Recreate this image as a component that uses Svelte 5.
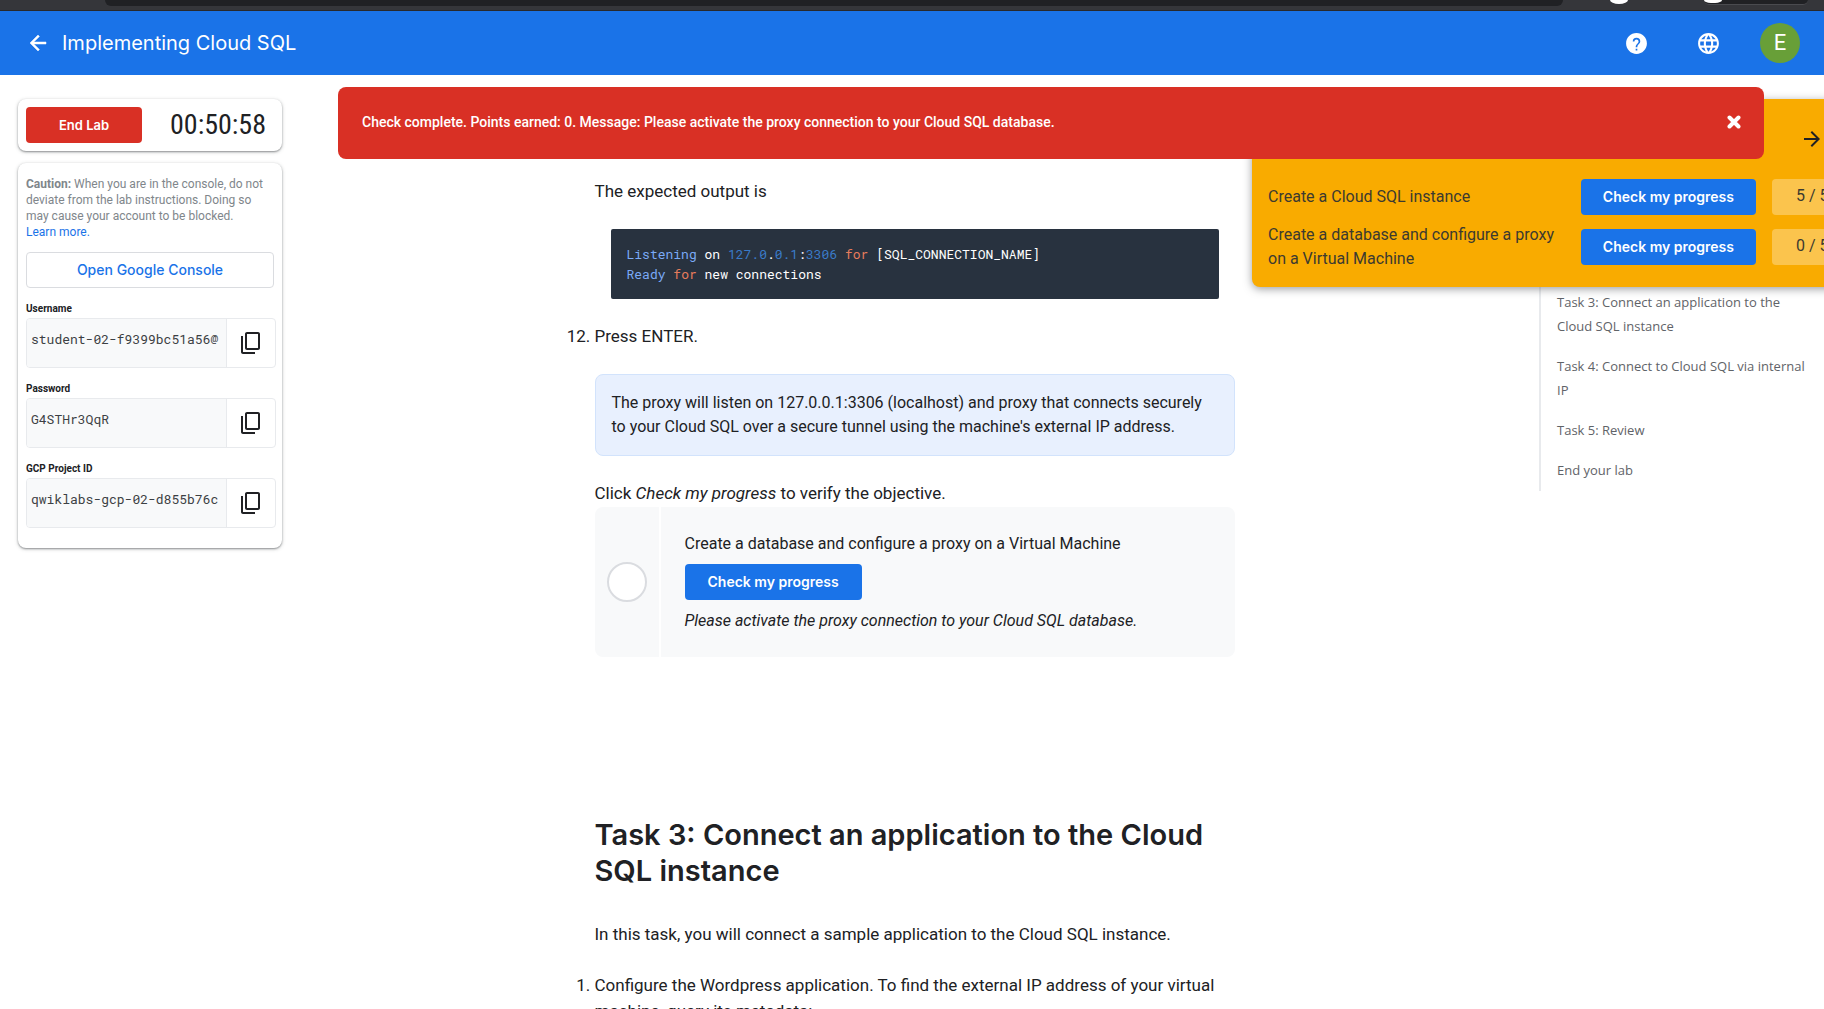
<script>
  const credentials = [
    { id: 'username', label: 'Username', value: 'student-02-f9399bc51a56@' },
    { id: 'password', label: 'Password', value: 'G4STHr3QqR' },
    { id: 'project', label: 'GCP Project ID', value: 'qwiklabs-gcp-02-d855b76c' },
  ];
  const objectives = [
    { title: 'Create a Cloud SQL instance', score: '5 / 5' },
    { title: 'Create a database and configure a proxy on a Virtual Machine', score: '0 / 5' },
  ];
  const outline = [
    'Task 3: Connect an application to the Cloud SQL instance',
    'Task 4: Connect to Cloud SQL via internal IP',
    'Task 5: Review',
    'End your lab',
  ];
  let toastOpen = $state(true);
</script>

<div class="page">
  <div class="browser" aria-hidden="true">
    <span class="omnibox"></span>
    <span class="ext"></span>
    <span class="profile"><span class="ext"></span></span>
  </div>

  <header>
    <a class="back" href="#catalog" aria-label="Back">
      <svg width="24" height="24" viewBox="0 0 24 24" fill="currentColor" stroke="currentColor" stroke-width="0.5"><path d="M20 11H7.83l5.59-5.59L12 4l-8 8 8 8 1.410-1.410L7.830 13H20z" /></svg>
    </a>
    <h1>Implementing Cloud SQL</h1>
    <button class="bar-icon" aria-label="Help">
      <svg width="25" height="25" viewBox="0 0 24 24" fill="currentColor"><path d="M12 2C6.480 2 2 6.480 2 12s4.480 10 10 10 10-4.480 10-10S17.520 2 12 2zm.8 16.600h-1.600V17h1.600v1.600zm1.900-6.500l-.8.800c-.8.800-1.100 1.400-1.100 2.700h-1.600v-.4c0-1 .4-1.900 1.100-2.600l1.100-1.100c.4-.4.600-.8.600-1.400a2 2 0 0 0-4 0H8.400a3.600 3.600 0 0 1 7.200 0c0 .8-.4 1.500-.9 2z" /></svg>
    </button>
    <button class="bar-icon" aria-label="Language">
      <svg width="25" height="25" viewBox="0 0 24 24" fill="currentColor"><path d="M11.990 2C6.470 2 2 6.480 2 12s4.470 10 9.990 10C17.520 22 22 17.520 22 12S17.520 2 11.990 2zm6.930 6h-2.950c-.32-1.250-.78-2.450-1.380-3.560 1.840.63 3.370 1.910 4.330 3.560zM12 4.040c.83 1.200 1.480 2.530 1.910 3.960h-3.820c.43-1.430 1.080-2.760 1.910-3.960zM4.260 14C4.100 13.360 4 12.690 4 12s.1-1.360.26-2h3.380c-.08.66-.14 1.320-.14 2s.06 1.340.14 2H4.260zm.82 2h2.950c.32 1.250.78 2.450 1.380 3.560-1.840-.63-3.370-1.900-4.330-3.560zm2.950-8H5.080c.96-1.660 2.490-2.930 4.330-3.560C8.810 5.550 8.350 6.750 8.030 8zM12 19.960c-.83-1.200-1.480-2.530-1.910-3.960h3.820c-.43 1.430-1.080 2.760-1.910 3.960zM14.340 14H9.660c-.09-.66-.16-1.320-.16-2s.07-1.350.16-2h4.680c.09.65.16 1.320.16 2s-.07 1.340-.16 2zm.25 5.560c.6-1.110 1.060-2.310 1.380-3.560h2.950c-.96 1.650-2.490 2.930-4.330 3.560zM16.360 14c.08-.66.14-1.320.14-2s-.06-1.340-.14-2h3.380c.16.64.26 1.310.26 2s-.1 1.360-.26 2h-3.380z" /></svg>
    </button>
    <button class="avatar" aria-label="Account">E</button>
  </header>

  <div class="body">
    <aside class="side">
      <section class="card control">
        <button class="end">End Lab</button>
        <time>00:50:58</time>
      </section>
      <section class="card">
        <p class="caution"><strong>Caution:</strong> When you are in the console, do not deviate from the lab instructions. Doing so may cause your account to be blocked. <a href="#learn">Learn more.</a></p>
        <button class="console">Open Google Console</button>
        {#each credentials as c}
          <div class="cred">
            <label for={c.id}>{c.label}</label>
            <div class="field">
              <input id={c.id} type="text" readonly value={c.value} />
              <button aria-label={`Copy ${c.label}`}>
                <svg width="24" height="24" viewBox="0 0 24 24" fill="currentColor"><path d="M16 21H4V5H2v16c0 1.100.9 2 2 2h12v-2zM19 1H8c-1.100 0-2 .9-2 2v14c0 1.100.9 2 2 2h11c1.100 0 2-.9 2-2V3c0-1.100-.9-2-2-2zm0 16H8V3h11v14z" /></svg>
              </button>
            </div>
          </div>
        {/each}
      </section>
    </aside>

    <main>
      <ol start="12">
        <li class="continued">
          <p>The expected output is</p>
          <pre><code><b class="type">Listening</b> on <b class="num">127.0</b>.<b class="num">0.1</b>:<b class="num">3306</b> <b class="kw">for</b> [SQL_CONNECTION_NAME]
<b class="type">Ready</b> <b class="kw">for</b> new connections</code></pre>
        </li>
        <li>Press ENTER.</li>
      </ol>
      <p class="note">The proxy will listen on 127.0.0.1:3306 (localhost) and proxy that connects securely to your Cloud SQL over a secure tunnel using the machine's external IP address.</p>
      <p>Click <em>Check my progress</em> to verify the objective.</p>
      <section class="step">
        <div class="mark"><span></span></div>
        <div class="detail">
          <p>Create a database and configure a proxy on a Virtual Machine</p>
          <button class="check">Check my progress</button>
          <p><em>Please activate the proxy connection to your Cloud SQL database.</em></p>
        </div>
      </section>
      <h2>Task 3: Connect an application to the Cloud SQL instance</h2>
      <p>In this task, you will connect a sample application to the Cloud SQL instance.</p>
      <ol class="next">
        <li>Configure the Wordpress application. To find the external IP address of your virtual machine, query its metadata:</li>
      </ol>
    </main>

    <nav aria-label="Lab outline">
      {#each outline as item}
        <a href="#section">{item}</a>
      {/each}
    </nav>
  </div>

  <section class="progress" aria-label="Lab progress">
    <div class="progress-top">
      <button aria-label="Collapse">
        <svg width="24" height="24" viewBox="0 0 24 24" fill="currentColor"><path d="M12 4l-1.410 1.410L16.170 11H4v2h12.170l-5.580 5.590L12 20l8-8z" /></svg>
      </button>
    </div>
    {#each objectives as o}
      <div class="objective">
        <p>{o.title}</p>
        <button class="check">Check my progress</button>
        <span class="score">{o.score}</span>
      </div>
    {/each}
  </section>

  {#if toastOpen}
    <div class="toast" role="alert">
      <p>Check complete. Points earned: 0. Message: Please activate the proxy connection to your Cloud SQL database.</p>
      <button aria-label="Close" onclick={() => (toastOpen = false)}>
        <svg width="14" height="14" viewBox="0 0 14 14" fill="none" stroke="currentColor" stroke-width="4" stroke-linecap="round"><path d="M2.500 2.500l9 9M11.500 2.500l-9 9" /></svg>
      </button>
    </div>
  {/if}
</div>

<style>
  :global(body) {
    background: #fff;
  }
  .page {
    position: relative;
    height: 100vh;
    overflow: hidden;
    color: #202124;
    font-family: Roboto, 'Liberation Sans', sans-serif;
    font-size: 17px;
    line-height: 24px;
  }
  .page *,
  .page {
    box-sizing: border-box;
  }
  p, h1, h2, ol, pre {
    margin: 0;
  }
  a {
    color: #1a73e8;
    text-decoration: none;
  }
  button {
    border: 0;
    padding: 0;
    background: none;
    color: inherit;
    font: inherit;
    cursor: pointer;
  }
  svg {
    display: block;
  }

  .browser {
    display: flex;
    align-items: flex-start;
    height: 11px;
    padding: 0 16px 0 105px;
    background: #35363a;
    border-bottom: 1px solid #28292c;
  }
  .omnibox {
    flex: 1;
    height: 6px;
    margin-right: 47px;
    background: #202124;
    border-radius: 0 0 12px 12px;
  }
  .ext {
    width: 18px;
    height: 4px;
    background: #fff;
    border-radius: 0 0 9px 9px / 0 0 4px 4px;
  }
  .profile {
    display: flex;
    width: 104px;
    height: 5px;
    margin-left: 76px;
    background: #202124;
    border-bottom: 1px solid #4a4b4f;
    border-radius: 0 0 12px 12px;
  }
  .profile .ext {
    height: 3px;
  }

  header {
    display: flex;
    align-items: center;
    height: 64px;
    padding: 0 24px 0 26px;
    background: #1a73e8;
    color: #fff;
  }
  .back {
    color: #fff;
  }
  h1 {
    flex: 1;
    margin-left: 12px;
    font: 400 20px/28px Inter, sans-serif;
  }
  .bar-icon {
    margin-right: 47px;
  }
  .bar-icon + .avatar {
    margin-left: -8px;
  }
  .avatar {
    width: 40px;
    height: 40px;
    border-radius: 50%;
    background: #689f38;
    font-size: 22px;
  }

  .body {
    display: grid;
    grid-template-columns: 290px minmax(0, 1fr) 285px;
    align-items: start;
  }
  .side {
    display: flex;
    flex-direction: column;
    gap: 12px;
    width: 264px;
    margin: 24px 0 0 18px;
  }
  .card {
    padding: 13px 8px 20px;
    border-radius: 8px;
    background: #fff;
    box-shadow: 0 1px 2px rgba(60, 64, 67, 0.5), 0 1px 4px rgba(60, 64, 67, 0.2);
  }
  .control {
    display: flex;
    align-items: center;
    padding: 8px;
  }
  .end {
    width: 116px;
    height: 36px;
    border-radius: 4px;
    background: #d93025;
    color: #fff;
    font: 600 13px/20px Inter, sans-serif;
  }
  time {
    flex: 1;
    padding-left: 20px;
    text-align: center;
    font: 400 28px/36px 'Roboto Condensed', Roboto, sans-serif;
  }
  .caution {
    color: #80868b;
    font-size: 12px;
    line-height: 16px;
  }
  .caution a {
    display: block;
  }
  .console {
    display: block;
    width: 100%;
    height: 36px;
    margin-top: 12px;
    border: 1px solid #dadce0;
    border-radius: 4px;
    color: #1a73e8;
    font: 500 14px/20px Inter, sans-serif;
  }
  .cred {
    margin-top: 15px;
  }
  label {
    display: block;
    margin-bottom: 3px;
    font-size: 10px;
    line-height: 12px;
    font-weight: 700;
  }
  .field {
    display: flex;
    width: 250px;
    height: 50px;
    border: 1px solid #e8eaed;
    border-radius: 4px;
    overflow: hidden;
  }
  .field input {
    flex: 1;
    min-width: 0;
    padding: 0 4px 8px;
    border: 0;
    border-right: 1px solid #e8eaed;
    outline: 0;
    background: #f8f9fa;
    color: #3c4043;
    font: 400 13px/20px 'Roboto Mono', 'Liberation Mono', monospace;
  }
  .field button {
    display: grid;
    place-items: center;
    width: 48px;
    color: #202124;
  }

  main {
    width: 100%;
    max-width: 640px;
    margin: 0 auto;
    padding-top: 104px;
  }
  ol {
    padding: 0;
  }
  .continued {
    list-style: none;
    counter-increment: list-item 0;
  }
  pre {
    margin: 26px 16px 25px;
    padding: 15px 16px;
    border-radius: 2px;
    background: #28323f;
    color: #fff;
    font: 400 13px/20px 'Roboto Mono', 'Liberation Mono', monospace;
  }
  code {
    font: inherit;
  }
  code b {
    font-weight: 400;
  }
  .type {
    color: #7baaf7;
  }
  .num {
    color: #3a7bc8;
  }
  .kw {
    color: #e67c5c;
  }
  .note {
    margin: 26px 0 25px;
    padding: 16px;
    border: 1px solid #d2e3fc;
    border-radius: 8px;
    background: #e8f0fe;
    font-size: 16px;
  }
  .step {
    display: flex;
    gap: 2px;
    margin-top: 2px;
    border-radius: 8px;
    overflow: hidden;
    font-size: 16px;
  }
  .mark {
    display: grid;
    place-items: center;
    width: 64px;
    background: #f8f9fa;
  }
  .mark span {
    width: 40px;
    height: 40px;
    border: 2px solid #dadce0;
    border-radius: 50%;
    background: #fff;
  }
  .detail {
    flex: 1;
    padding: 25px 24px 24px;
    background: #f8f9fa;
  }
  .check {
    padding: 0 22px;
    height: 36px;
    border-radius: 4px;
    background: #1a73e8;
    color: #fff;
    font: 600 14px/20px Inter, sans-serif;
    white-space: nowrap;
  }
  .detail .check {
    display: block;
    margin: 8px 0 9px;
    padding: 0 23px;
  }
  h2 {
    margin: 160px 0 33px;
    font: 600 29px/36px Inter, sans-serif;
  }
  .next {
    margin-top: 26px;
    line-height: 26px;
  }

  nav {
    display: flex;
    flex-direction: column;
    gap: 16px;
    margin-top: 207px;
    padding: 8px 12px 9px 16px;
    border-left: 2px solid #e8eaed;
  }
  nav a {
    color: #5f6368;
    font: 500 13px/24px 'Open Sans', sans-serif;
  }

  .progress {
    position: absolute;
    top: 99px;
    right: -48px;
    width: 620px;
    padding: 0 16px 16px;
    border-radius: 8px;
    background: #f9ab00;
    box-shadow: 0 2px 8px rgba(60, 64, 67, 0.5);
    display: grid;
    gap: 8px;
    font-size: 16px;
  }
  .progress-top {
    display: flex;
    align-items: center;
    justify-content: flex-end;
    height: 72px;
    padding: 8px 32px 0 0;
  }
  .objective {
    display: flex;
    align-items: center;
    gap: 16px;
  }
  .objective p {
    flex: 1;
    color: #3c3a30;
  }
  .score {
    width: 84px;
    height: 36px;
    padding-left: 24px;
    border-radius: 4px;
    background: #fbc44d;
    color: #3c3a30;
    line-height: 34px;
  }

  .toast {
    position: absolute;
    top: 87px;
    left: 338px;
    right: 60px;
    display: flex;
    align-items: center;
    justify-content: space-between;
    height: 72px;
    padding: 0 23px 3px 24px;
    border-radius: 8px;
    background: #d93025;
    color: #fff;
    font-size: 14px;
    font-weight: 500;
  }
</style>
